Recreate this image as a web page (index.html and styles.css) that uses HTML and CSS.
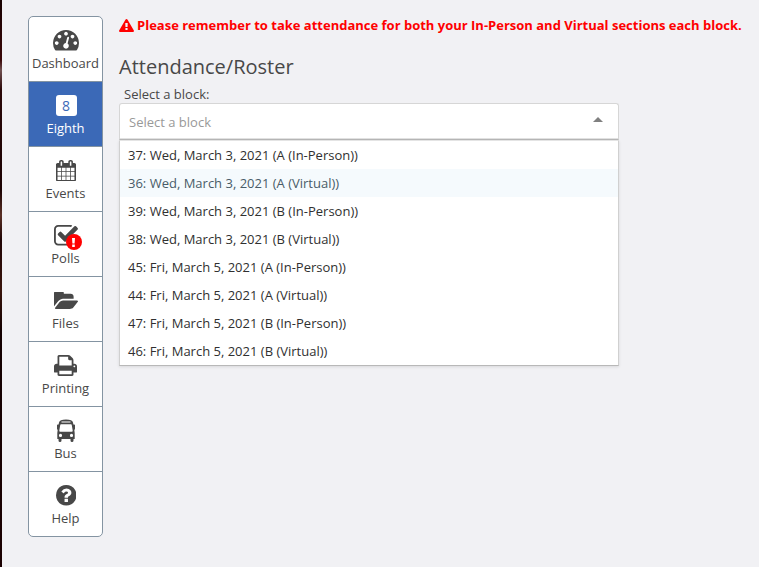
FILE: index.html
```
<!DOCTYPE html>
<html lang="en">
<head>
<meta charset="utf-8">
<title>Attendance/Roster</title>
<link rel="stylesheet" href="styles.css">
</head>
<body>
<div class="page">
  <nav class="nav">
    <a class="nav-item"><span class="icon"><svg width="26" height="20.5" viewBox="0 256 1792 1408" preserveAspectRatio="none"><path d="M384 1152q0-53-37.500-90.500t-90.500-37.500-90.500 37.500-37.500 90.500 37.500 90.500 90.500 37.500 90.500-37.500 37.500-90.500zm192-448q0-53-37.500-90.500t-90.500-37.500-90.500 37.500-37.500 90.500 37.500 90.500 90.500 37.500 90.500-37.500 37.500-90.500zm428 481l101-382q6-26-7.500-48.500t-38.500-29.500-48 6.500-30 39.500l-101 382q-60 5-107 43.500t-63 98.500q-20 77 20 146t117 89 146-20 89-117q16-60-6-117t-72-91zm660-33q0-53-37.500-90.500t-90.500-37.500-90.500 37.500-37.500 90.500 37.500 90.500 90.500 37.500 90.500-37.500 37.500-90.500zm-640-640q0-53-37.500-90.500t-90.500-37.500-90.500 37.500-37.500 90.500 37.500 90.500 90.500 37.500 90.500-37.500 37.500-90.500zm448 192q0-53-37.500-90.500t-90.500-37.500-90.500 37.500-37.500 90.500 37.500 90.500 90.500 37.500 90.500-37.500 37.500-90.500zm320 448q0 261-141 483-19 29-54 29h-1402q-35 0-54-29-141-221-141-483 0-182 71-348t191-286 286-191 348-71 348 71 286 191 191 286 71 348z"/></svg></span><span class="label">Dashboard</span></a>
    <a class="nav-item active"><span class="icon"><span class="eight">8</span></span><span class="label">Eighth</span></a>
    <a class="nav-item"><span class="icon"><svg width="20" height="21.500" viewBox="64 0 1664 1792" preserveAspectRatio="none"><path d="M192 1664h288v-288h-288v288zm352 0h320v-288h-320v288zm-352-352h288v-320h-288v320zm352 0h320v-320h-320v320zm-352-384h288v-288h-288v288zm736 736h320v-288h-320v288zm-384-736h320v-288h-320v288zm768 736h288v-288h-288v288zm-384-352h320v-320h-320v320zm-352-864v-288q0-13-9.500-22.500t-22.500-9.500h-64q-13 0-22.500 9.500t-9.500 22.500v288q0 13 9.500 22.500t22.500 9.500h64q13 0 22.500-9.500t9.500-22.500zm736 864h288v-320h-288v320zm-384-384h320v-288h-320v288zm384 0h288v-288h-288v288zm32-480v-288q0-13-9.500-22.500t-22.500-9.500h-64q-13 0-22.500 9.500t-9.500 22.500v288q0 13 9.500 22.500t22.500 9.500h64q13 0 22.500-9.500t9.500-22.500zm384-64v1280q0 52-38 90t-90 38h-1408q-52 0-90-38t-38-90v-1280q0-52 38-90t90-38h128v-96q0-66 47-113t113-47h64q66 0 113 47t47 113v96h384v-96q0-66 47-113t113-47h64q66 0 113 47t47 113v96h128q52 0 90 38t38 90z"/></svg></span><span class="label">Events</span></a>
    <a class="nav-item"><span class="icon"><svg width="24" height="20.500" viewBox="64 128 1664 1408" preserveAspectRatio="none"><path d="M1472 930v318q0 119-84.500 203.500t-203.500 84.500h-832q-119 0-203.500-84.500t-84.500-203.500v-832q0-119 84.500-203.500t203.500-84.500h832q63 0 117 25 15 7 18 23 3 17-9 29l-49 49q-10 10-23 10-3 0-9-2-23-6-45-6h-832q-66 0-113 47t-47 113v832q0 66 47 113t113 47h832q66 0 113-47t47-113v-254q0-13 9-22l64-64q10-10 23-10 6 0 12 3 20 8 20 29zm231-489l-814 814q-24 24-57 24t-57-24l-430-430q-24-24-24-57t24-57l110-110q24-24 57-24t57 24l263 263 647-647q24-24 57-24t57 24l110 110q24 24 24 57t-24 57z"/></svg><span class="badge"><svg width="3" height="9" viewBox="0 0 3 9"><path d="M0 0h3l-.4 5.600h-2.200zM.2 6.500h2.600v2.500h-2.600z"/></svg></span></span><span class="label">Polls</span></a>
    <a class="nav-item"><span class="icon"><svg width="24" height="17" viewBox="64 256 1879 1280" preserveAspectRatio="none"><path d="M1943 952q0 31-31 66l-336 396q-43 51-120.500 86.500t-143.500 35.500h-1088q-34 0-60.500-13t-26.500-43q0-31 31-66l336-396q43-51 120.500-86.500t143.500-35.500h1088q34 0 60.500 13t26.500 43zm-343-344v160h-832q-94 0-197 47.500t-164 119.500l-337 396-5 6q0-4-.5-12.500t-.5-12.500v-960q0-92 66-158t158-66h320q92 0 158 66t66 158v32h544q92 0 158 66t66 158z"/></svg></span><span class="label">Files</span></a>
    <a class="nav-item"><span class="icon"><svg width="23" height="21" viewBox="64 128 1664 1536" preserveAspectRatio="none"><path d="M448 1536h896v-256h-896v256zm0-640h896v-384h-160q-40 0-68-28t-28-68v-160h-640v640zm1152 64q0-26-19-45t-45-19-45 19-19 45 19 45 45 19 45-19 19-45zm128 0v416q0 13-9.500 22.500t-22.500 9.500h-224v160q0 40-28 68t-68 28h-960q-40 0-68-28t-28-68v-160h-224q-13 0-22.500-9.500t-9.500-22.500v-416q0-79 56.500-135.500t135.500-56.500h64v-544q0-40 28-68t68-28h672q40 0 88 20t76 48l152 152q28 28 48 76t20 88v256h64q79 0 135.500 56.500t56.500 135.500z"/></svg></span><span class="label">Printing</span></a>
    <a class="nav-item"><span class="icon"><svg width="18" height="23" viewBox="0 0 18 23"><path fill-rule="evenodd" d="M2 3.500Q2.500 .5 9 .5T16 3.500L16.400 5.500H17.200Q18 5.500 18 6.300V10Q18 10.800 17.300 10.800L17.700 14V20H16.500V21.500Q16.500 23 15 23T13.500 21.500V20H4.500V21.500Q4.500 23 3 23T1.500 21.500V20H.3V14L.7 10.800Q0 10.800 0 10V6.300Q0 5.500 .8 5.500H1.600zM4.500 2.400V3.500H13.500V2.400zM4 5.200Q3.400 5.200 3.300 5.800L2.300 11.500Q2.200 12.700 3.200 12.700H14.800Q15.800 12.700 15.700 11.500L14.700 5.800Q14.600 5.200 14 5.200zM3.500 14.800A1.600 1.600 0 1 0 3.500 18A1.600 1.600 0 1 0 3.500 14.800zM14.500 14.800A1.600 1.600 0 1 0 14.500 18A1.600 1.600 0 1 0 14.500 14.800z"/></svg></span><span class="label">Bus</span></a>
    <a class="nav-item"><span class="icon help"><svg width="20.500" height="20.500" viewBox="128 128 1536 1536"><path d="M1024 1376v-192q0-14-9-23t-23-9h-192q-14 0-23 9t-9 23v192q0 14 9 23t23 9h192q14 0 23-9t9-23zm256-672q0-88-55.500-163t-138.500-116-170-41q-243 0-371 213-15 24 8 42l132 100q7 6 19 6 16 0 25-12 53-68 86-92 34-24 86-24 48 0 85.500 26t37.500 59q0 38-20 61t-68 45q-63 28-115.500 86.500t-52.500 125.500v36q0 14 9 23t23 9h192q14 0 23-9t9-23q0-19 21.500-49.500t54.500-49.500q32-18 49-28.500t46-35 44.500-48 28-60.500 12.500-81zm384 192q0 209-103 385.500t-279.500 279.500-385.500 103-385.500-103-279.500-279.500-103-385.500 103-385.500 279.500-279.500 385.500-103 385.500 103 279.500 279.500 103 385.500z"/></svg></span><span class="label">Help</span></a>
  </nav>
  <main class="main">
    <p class="alert"><svg width="15" height="13" viewBox="0 0 1792 1664" preserveAspectRatio="none"><path d="M1024 1375v-190q0-14-9.500-23.500t-22.500-9.500h-192q-13 0-22.500 9.500t-9.500 23.500v190q0 14 9.500 23.500t22.500 9.500h192q13 0 22.500-9.500t9.500-23.500zm-2-374l18-459q0-12-10-19-13-11-24-11h-220q-11 0-24 11-10 7-10 21l17 457q0 10 10 16.500t24 6.500h185q14 0 23.500-6.500t10.500-16.500zm-14-934l768 1408q35 63-2 126-17 29-46.500 46t-63.500 17h-1536q-34 0-63.500-17t-46.500-46q-37-63-2-126l768-1408q17-31 47-49t65-18 65 18 47 49z"/></svg><span>Please remember to take attendance for both your In-Person and Virtual sections each block.</span></p>
    <h2>Attendance/Roster</h2>
    <div class="field-label">Select a block:</div>
    <div class="select"><span>Select a block</span><i class="arrow"></i></div>
    <ul class="options">
      <li>37: Wed, March 3, 2021 (A (In-Person))</li>
      <li class="hover">36: Wed, March 3, 2021 (A (Virtual))</li>
      <li>39: Wed, March 3, 2021 (B (In-Person))</li>
      <li>38: Wed, March 3, 2021 (B (Virtual))</li>
      <li>45: Fri, March 5, 2021 (A (In-Person))</li>
      <li>44: Fri, March 5, 2021 (A (Virtual))</li>
      <li>47: Fri, March 5, 2021 (B (In-Person))</li>
      <li>46: Fri, March 5, 2021 (B (Virtual))</li>
    </ul>
  </main>
</div>
</body>
</html>
```
FILE: styles.css
```
* { box-sizing: border-box; }
body {
  margin: 0;
  background: linear-gradient(#180202 0, #3a0808 60px, #705050 70px, #2a0808 90px, #1c0303 190px, #5a3025 215px, #200505 240px, #3a150c 290px, #140101 330px, #1c0202 567px);
  font: 13px/18px "Open Sans", "Noto Sans", sans-serif;
  color: #484848;
}
.page {
  display: flex;
  align-items: flex-start;
  gap: 16px;
  min-height: 567px;
  margin-left: 2px;
  padding: 16px 0 0 26px;
  background: #f1f1f4;
}
.nav {
  flex: none;
  width: 75px;
  border: 1px solid #8494a2;
  border-radius: 5px;
  background: #fff;
  overflow: hidden;
}
.nav-item {
  display: flex;
  flex-direction: column;
  align-items: center;
  height: 65px;
  border-bottom: 1px solid #8494a2;
}
.nav-item:last-child { height: 64px; border-bottom: 0; }
.nav-item.active { background: #3b69b7; color: #fff; }
.icon {
  position: relative;
  display: flex;
  align-items: center;
  justify-content: center;
  height: 23px;
  margin-top: 12px;
}
.icon.help { padding-left: 1px; }
.icon svg, .alert svg { display: block; fill: currentColor; }
.label { margin-top: 2px; }
.eight {
  width: 21px;
  height: 21px;
  margin: -1px 0 0 1px;
  border-radius: 3px;
  background: #fff;
  color: #3b69b7;
  font-size: 14px;
  line-height: 21px;
  text-align: center;
}
.badge {
  position: absolute;
  left: 12px;
  top: 10px;
  display: flex;
  align-items: center;
  justify-content: center;
  width: 16px;
  height: 16px;
  border-radius: 50%;
  background: #f00;
  color: #fff;
}
.main { width: 630px; }
.alert {
  display: flex;
  align-items: center;
  gap: 3px;
  margin: 0;
  color: #f00;
  font-weight: 700;
  white-space: nowrap;
}
h2 {
  margin: 19px 0 0;
  font-size: 20px;
  line-height: 28px;
  font-weight: 400;
}
.field-label { margin: 4px 0 0 5px; }
.select {
  display: flex;
  align-items: center;
  justify-content: space-between;
  width: 500px;
  height: 37px;
  padding: 1px 15px 0 9px;
  border: 1px solid #d6d6d6;
  border-bottom-color: #b8b8b8;
  border-radius: 3px 3px 0 0;
  background: #fff;
  box-shadow: inset 0 -1px #e2e2e2;
  color: #999;
}
.arrow {
  margin-bottom: 5px;
  border: 5px solid transparent;
  border-top: 0;
  border-bottom-color: #808080;
}
.options {
  width: 500px;
  margin: 0;
  padding: 0;
  list-style: none;
  border: 1px solid #d0d0d0;
  border-top-color: #e4e4e4;
  border-bottom-color: #b8b8b8;
  background: #fff;
  box-shadow: 0 1px 3px rgba(0, 0, 0, .1);
  color: #303030;
}
.options li { height: 28px; padding: 5px 8px; }
.options .hover { background: #f5fafd; color: #495c68; }
```
